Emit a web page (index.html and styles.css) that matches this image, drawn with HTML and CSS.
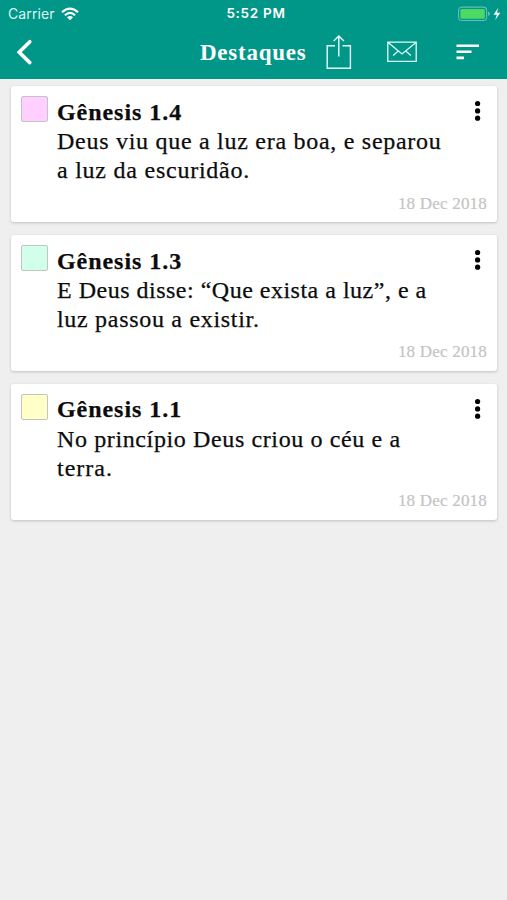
FILE: index.html
```html
<!DOCTYPE html>
<html lang="pt">
<head>
<meta charset="utf-8">
<title>Destaques</title>
<link rel="stylesheet" href="styles.css">
</head>
<body>
<header class="header">
  <div class="status">
    <div class="carrier"><span>Carrier</span>
      <svg width="18" height="14" viewBox="0 0 18 14" fill="none" stroke="#fff" stroke-width="2.2"><path d="M1 5.2Q9-2 17 5.2M3.9 8.2Q9 3.7 14.1 8.2"/><path d="M6 10.3Q9 7.7 12 10.3L9 13.2Z" fill="#fff" stroke="none"/></svg>
    </div>
    <div class="time">5:52 PM</div>
    <svg class="battery" width="44" height="16" viewBox="0 0 44 16"><rect x=".6" y="1.1" width="28" height="13.4" rx="3.2" fill="none" stroke="#67bdb3" stroke-width="1.1"/><rect x="2.4" y="2.9" width="24.4" height="9.8" rx="1.5" fill="#4cd964"/><path d="M30 5.6Q32 6.2 32 7.8T30 10Z" fill="#67bdb3"/><path d="M40.3 1.8 35.5 8.8H38.8L37.2 14 42.3 6.8H39Z" fill="#fff"/></svg>
  </div>
  <nav class="bar">
    <svg class="back" width="20" height="30" viewBox="0 0 20 30" fill="none" stroke="#fff" stroke-width="3.6" stroke-linecap="round"><path d="M15.8 4.7 5.2 15.2 15.8 25.6"/></svg>
    <h1>Destaques</h1>
    <svg class="share" width="26" height="36" viewBox="0 0 26 36" fill="none" stroke="#e9fffc" stroke-width="1.4"><path d="M9 11.7H1.2V34.2H24.4V11.7H16.6M12.8 22.5V2M7.7 7 12.8 1.9 17.9 7"/></svg>
    <svg class="mail" width="30" height="22" viewBox="0 0 30 22" fill="none" stroke="#dffbf7" stroke-width="1.3"><path d="M.8 1.2H29.2V20.4H.8ZM.8 1.2 15 13 29.2 1.2M6.2 14.6 11.2 10M23.8 14.6 18.8 10"/></svg>
    <svg class="sort" width="24" height="18" viewBox="0 0 24 18" fill="#fff"><path d="M.5 1.4H23V4H.5ZM.5 7.5H15.5V10.1H.5ZM.5 13.6H8V16.2H.5Z"/></svg>
  </nav>
</header>
<main class="list">
  <article class="card">
    <span class="swatch pink"></span>
    <div class="verse"><h2>Gênesis 1.4</h2><p><span class="l1">Deus viu que a luz era boa, e separou</span><br><span class="l2">a luz da escuridão.</span></p></div>
    <svg class="more" width="8" height="22" viewBox="0 0 8 22"><circle cx="3.6" cy="3.5" r="2.6"/><circle cx="3.6" cy="10.9" r="2.6"/><circle cx="3.6" cy="18.2" r="2.6"/></svg>
    <time>18 Dec 2018</time>
  </article>
  <article class="card">
    <span class="swatch mint"></span>
    <div class="verse"><h2>Gênesis 1.3</h2><p><span class="l3">E Deus disse: “Que exista a luz”, e a</span><br><span class="l4">luz passou a existir.</span></p></div>
    <svg class="more" width="8" height="22" viewBox="0 0 8 22"><circle cx="3.6" cy="3.5" r="2.6"/><circle cx="3.6" cy="10.9" r="2.6"/><circle cx="3.6" cy="18.2" r="2.6"/></svg>
    <time>18 Dec 2018</time>
  </article>
  <article class="card">
    <span class="swatch yellow"></span>
    <div class="verse"><h2>Gênesis 1.1</h2><p><span class="l5">No princípio Deus criou o céu e a</span><br><span class="l6">terra.</span></p></div>
    <svg class="more" width="8" height="22" viewBox="0 0 8 22"><circle cx="3.6" cy="3.5" r="2.6"/><circle cx="3.6" cy="10.9" r="2.6"/><circle cx="3.6" cy="18.2" r="2.6"/></svg>
    <time>18 Dec 2018</time>
  </article>
</main>
</body>
</html>
```
FILE: styles.css
```css
* { box-sizing: border-box; }
body { margin: 0; min-height: 900px; background: #efefef; color: #0c0c0c; font-family: "Liberation Serif", serif; }
h1, h2, p { margin: 0; }
svg { display: block; flex: none; }
.header { height: 79px; background: #009688; color: #fff; }
.status { height: 27px; display: grid; grid-template-columns: 1fr auto 1fr; align-items: center; padding: 0 5px 0 8px; font: 14px/27px Inter, sans-serif; }
.carrier { display: flex; align-items: center; gap: 6px; letter-spacing: .1px; color: #dff5f2; }
.time { font-size: 13.5px; font-weight: 600; letter-spacing: .7px; margin-left: 2px; }
.battery { justify-self: end; }
.bar { height: 52px; display: flex; align-items: flex-start; padding-left: 14px; }
.back { margin-top: 10px; }
h1 { width: 106px; margin: 11px 0 0 166px; font-size: 23px; line-height: 30px; letter-spacing: .75px; white-space: nowrap; }
.share { margin: 7px 0 0 20px; }
.mail { margin: 14px 0 0 35px; }
.sort { margin: 16px 0 0 39px; }
.list { display: flex; flex-direction: column; gap: 12.5px; padding: 7.2px 10px 0 11px; }
.card { height: 136.3px; background: #fff; border-radius: 3px; box-shadow: 0 1px 3px rgba(0, 0, 0, .2); display: grid; grid-template-columns: 36px 1fr 8px; grid-template-rows: 107px 20px; padding: 0 15px 0 10px; }
.swatch { width: 27px; height: 26px; margin-top: 10px; border: 1px solid #c4c4c4; border-radius: 2px; }
.pink { background: #ffd0ff; }
.mint { background: #d2ffea; }
.yellow { background: #ffffc8; }
.verse { padding-top: 11.6px; font-size: 24px; line-height: 29.3px; white-space: nowrap; -webkit-text-stroke: .25px #0c0c0c; }
h2 { font-size: 24px; line-height: 29.3px; letter-spacing: .95px; }
.verse p { letter-spacing: .5px; }
.verse .l1 { letter-spacing: .72px; }
.verse .l2 { letter-spacing: .76px; }
.verse .l4 { letter-spacing: .7px; }
.verse .l5 { letter-spacing: .62px; }
.verse .l6 { letter-spacing: 1px; }
.more { margin-top: 14px; }
time { grid-column: 1 / -1; justify-self: end; margin: .5px -5px 0 0; font-size: 17px; line-height: 20px; color: #c4c4c4; letter-spacing: .2px; -webkit-text-stroke: .2px #c4c4c4; }
```
